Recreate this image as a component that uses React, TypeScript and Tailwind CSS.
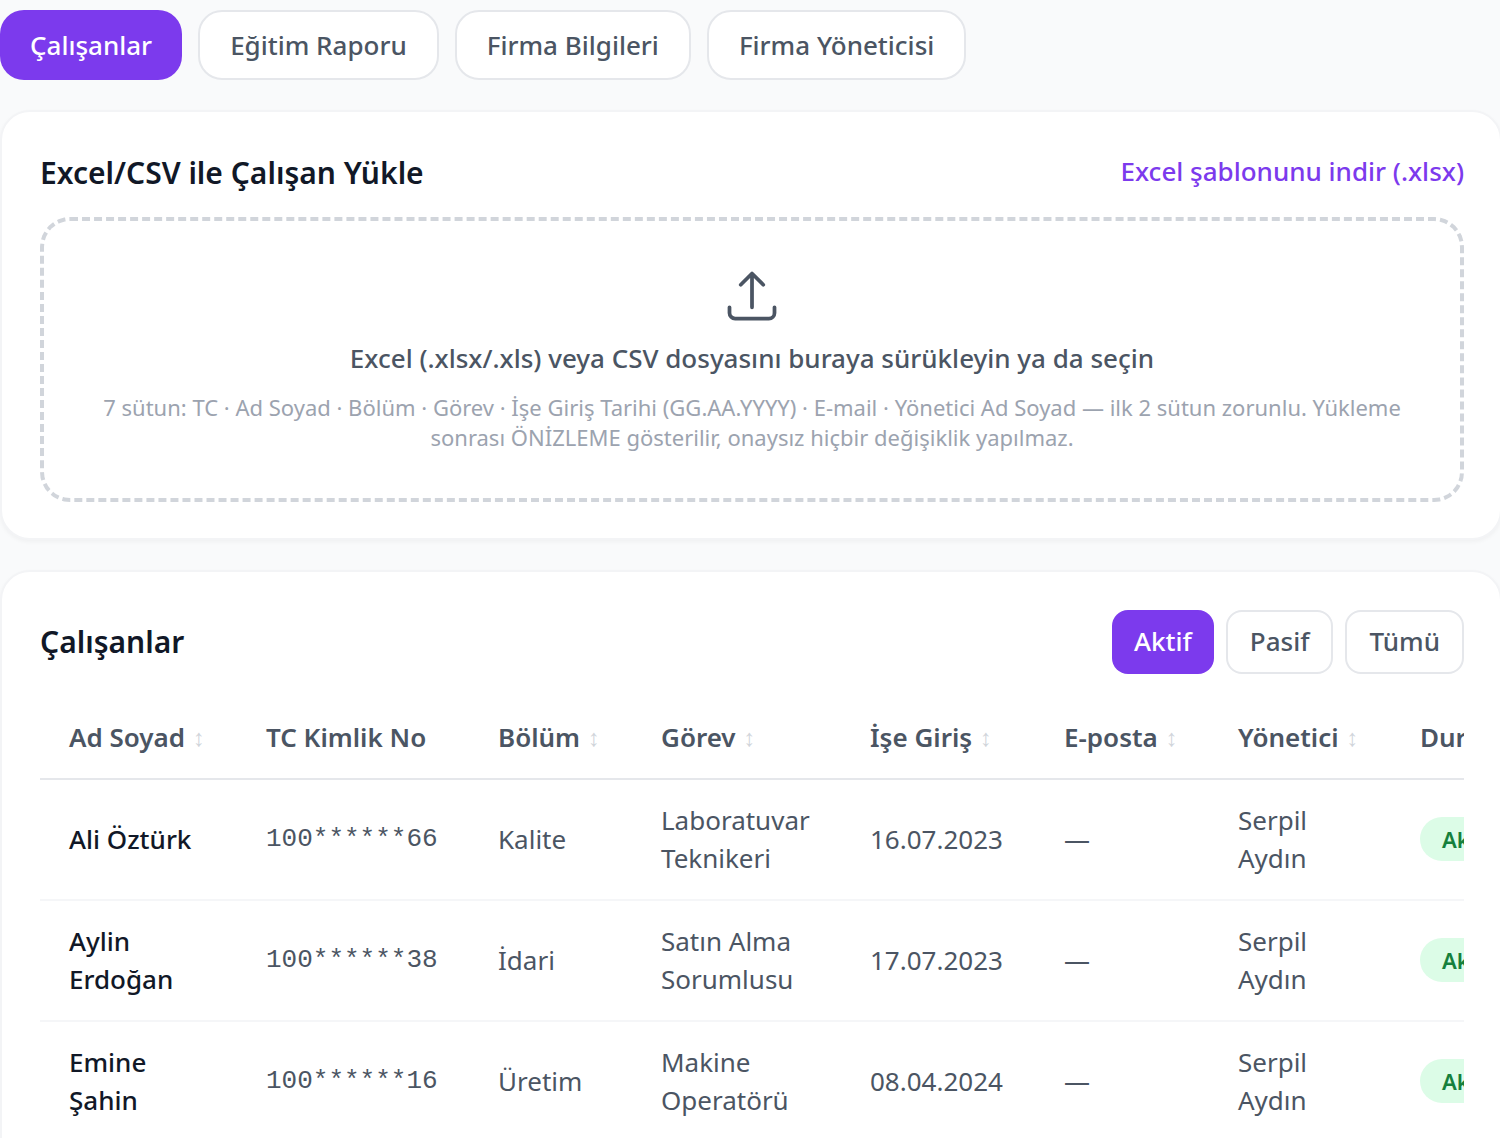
import { useState } from "react";
import clsx from "clsx";

const tabs = ["Çalışanlar", "Eğitim Raporu", "Firma Bilgileri", "Firma Yöneticisi"];

const filters = ["Aktif", "Pasif", "Tümü"];

const columns = [
  { label: "Ad Soyad", sortable: true, width: "w-[197px]" },
  { label: "TC Kimlik No", sortable: false, width: "w-[232px]" },
  { label: "Bölüm", sortable: true, width: "w-[163px]" },
  { label: "Görev", sortable: true, width: "w-[209px]" },
  { label: "İşe Giriş", sortable: true, width: "w-[194px]" },
  { label: "E-posta", sortable: true, width: "w-[174px]" },
  { label: "Yönetici", sortable: true, width: "w-[182px]" },
  { label: "Durum", sortable: true, width: "w-[180px]" },
];

const employees = [
  {
    name: "Ali Öztürk",
    tc: "100******66",
    department: "Kalite",
    role: "Laboratuvar Teknikeri",
    startDate: "16.07.2023",
    email: "—",
    manager: "Serpil Aydın",
    status: "Aktif",
  },
  {
    name: "Aylin Erdoğan",
    tc: "100******38",
    department: "İdari",
    role: "Satın Alma Sorumlusu",
    startDate: "17.07.2023",
    email: "—",
    manager: "Serpil Aydın",
    status: "Aktif",
  },
  {
    name: "Emine Şahin",
    tc: "100******16",
    department: "Üretim",
    role: "Makine Operatörü",
    startDate: "08.04.2024",
    email: "—",
    manager: "Serpil Aydın",
    status: "Aktif",
  },
];

const cell = "px-[29px] pt-[21px] pb-[22px]";

const UploadIcon = () => (
  <svg
    className="size-[60px]"
    viewBox="0 0 24 24"
    fill="none"
    stroke="currentColor"
    strokeWidth={1.5}
    strokeLinecap="round"
    strokeLinejoin="round"
    aria-hidden="true"
  >
    <path d="M3 16.5v2.25A2.25 2.25 0 0 0 5.25 21h13.5A2.25 2.25 0 0 0 21 18.75V16.5m-13.5-9L12 3m0 0 4.5 4.5M12 3v13.5" />
  </svg>
);

const UploadCard = () => {
  return (
    <section className="rounded-[30px] border-2 border-[#f3f4f6] bg-white pt-[38px] pr-9 pb-9 pl-[38px] shadow-[0_2px_4px_rgba(0,0,0,0.04)]">
      <div className="mb-[21px] flex items-start justify-between">
        <h2 className="text-[30px] leading-[46px] font-semibold text-[#111827]">
          Excel/CSV ile Çalışan Yükle
        </h2>
        <a href="#sablon" className="text-[26px] leading-[42px] font-medium text-[#7c3aed]">
          Excel şablonunu indir (.xlsx)
        </a>
      </div>

      <button
        type="button"
        className="flex w-full flex-col items-center rounded-[30px] border-4 border-dashed border-[#d1d5db] px-11 pt-[45px] pb-[46px]"
      >
        <span className="text-[#4b5563]">
          <UploadIcon />
        </span>
        <span className="mt-[13px] text-[26px] leading-[38px] font-medium text-[#4b5563]">
          Excel (.xlsx/.xls) veya CSV dosyasını buraya sürükleyin ya da seçin
        </span>
        <span className="mt-[15px] text-[22px] leading-[30px] text-[#9ca3af]">
          7 sütun: TC · Ad Soyad · Bölüm · Görev · İşe Giriş Tarihi (GG.AA.YYYY) · E-mail · Yönetici
          Ad Soyad — ilk 2 sütun zorunlu. Yükleme sonrası ÖNİZLEME gösterilir, onaysız hiçbir
          değişiklik yapılmaz.
        </span>
      </button>
    </section>
  );
};

const EmployeesCard = () => {
  const [filter, setFilter] = useState("Aktif");

  return (
    <section className="rounded-[30px] border-2 border-[#f3f4f6] bg-white pt-[38px] pr-9 pb-[38px] pl-[38px] shadow-[0_2px_4px_rgba(0,0,0,0.04)]">
      <div className="mb-[23px] flex items-center justify-between">
        <h2 className="text-[30px] leading-[46px] font-semibold text-[#111827]">Çalışanlar</h2>
        <div className="flex gap-3">
          {filters.map((item) => (
            <button
              key={item}
              type="button"
              onClick={() => setFilter(item)}
              className={clsx(
                "h-16 rounded-2xl pb-0.5 text-[26px] leading-[38px] font-medium",
                filter === item
                  ? "bg-[#7c3aed] px-[22px] text-white"
                  : "border-2 border-[#e5e7eb] bg-white px-[22px] text-[#4b5563]"
              )}
            >
              {item}
            </button>
          ))}
        </div>
      </div>

      <div className="overflow-x-auto [scrollbar-width:none]">
        <table className="w-[1531px] table-fixed border-collapse text-left text-[26px] leading-[38px] text-[#4b5563]">
          <thead>
            <tr className="border-b-2 border-[#e5e7eb]">
              {columns.map((column) => (
                <th key={column.label} className={clsx(cell, "font-semibold", column.width)}>
                  {column.sortable ? (
                    <button type="button" className="flex items-center gap-2 whitespace-nowrap">
                      {column.label}
                      <span className="text-[24px] font-normal text-[#d1d5db]">↕</span>
                    </button>
                  ) : (
                    column.label
                  )}
                </th>
              ))}
            </tr>
          </thead>
          <tbody>
            {employees.map((employee) => (
              <tr key={employee.tc} className="border-b-2 border-[#f5f6f8]">
                <td className={clsx(cell, "font-medium text-[#111827]")}>{employee.name}</td>
                <td className={clsx(cell, "font-['Liberation_Mono',monospace]")}>{employee.tc}</td>
                <td className={cell}>{employee.department}</td>
                <td className={cell}>{employee.role}</td>
                <td className={cell}>{employee.startDate}</td>
                <td className={cell}>{employee.email}</td>
                <td className={cell}>{employee.manager}</td>
                <td className={cell}>
                  <span className="inline-flex h-11 items-center rounded-full bg-[#dcfce7] px-[22px] text-[22px] leading-[30px] font-semibold text-[#15803d]">
                    {employee.status}
                  </span>
                </td>
              </tr>
            ))}
          </tbody>
        </table>
      </div>
    </section>
  );
};

const App = () => {
  const [activeTab, setActiveTab] = useState("Çalışanlar");

  return (
    <main className="h-screen overflow-hidden bg-[#f9fafb] pt-[10px] font-['Noto_Sans',sans-serif]">
      <nav className="flex gap-4">
        {tabs.map((tab) => (
          <button
            key={tab}
            type="button"
            onClick={() => setActiveTab(tab)}
            className={clsx(
              "h-[70px] rounded-3xl px-[30px] text-[26px] leading-[38px] font-medium",
              activeTab === tab
                ? "bg-[#7c3aed] text-white"
                : "border-2 border-[#e5e7eb] bg-white text-[#4b5563]"
            )}
          >
            {tab}
          </button>
        ))}
      </nav>

      <div className="-mr-0.5 mt-[30px] flex flex-col gap-[30px]">
        <UploadCard />
        <EmployeesCard />
      </div>
    </main>
  );
};

export default App;
